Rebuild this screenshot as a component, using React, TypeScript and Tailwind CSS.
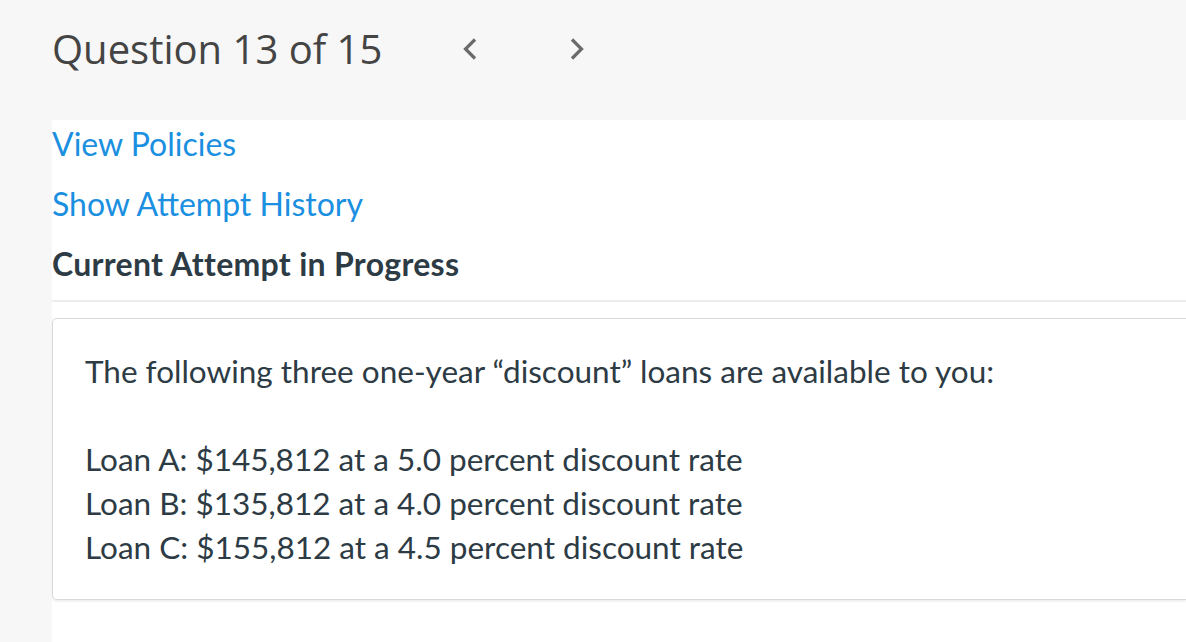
function Chevron({ dir }: { dir: 'left' | 'right' }) {
  return (
    <svg width="16" height="24" viewBox="0 0 16 24" fill="none">
      <path
        d={dir === 'left' ? 'M13 2.5 L3.5 12 L13 21.5' : 'M3 2.5 L12.5 12 L3 21.5'}
        stroke="#6b6b6b"
        strokeWidth="3.2"
      />
    </svg>
  );
}

export default function App() {
  return (
    <div className="min-h-[642px] bg-[#f7f7f7] flex flex-col">
      <div className="h-[120px] flex items-start pl-[52px] pt-[22px]">
        <h1 className="font-['Open_Sans',sans-serif] text-[40px] leading-[54px] text-[#444444]">
          Question 13 of 15
        </h1>
        <div className="flex items-center h-[54px] ml-[80px] gap-[91px]">
          <Chevron dir="left" />
          <Chevron dir="right" />
        </div>
      </div>

      <div className="flex-1 ml-[52px] bg-white font-['Lato',sans-serif] text-[32px] leading-[48px]">
        <div className="flex flex-col gap-3">
          <a className="text-[#1b8fe0] cursor-pointer">View Policies</a>
          <a className="text-[#1b8fe0] cursor-pointer">Show Attempt History</a>
          <div className="font-bold text-[#2d3b45] tracking-[0.3px]">Current Attempt in Progress</div>
        </div>
        <div className="mt-3 border-t-2 border-[#ededed]" />
        <div className="mt-[16px] border border-[#d9d9d9] border-r-0 rounded-l-[5px] shadow-[0_2px_2px_rgba(0,0,0,0.06)] pl-[32px] pt-[30px] pb-[30px] text-[#2d3b45] text-[31.5px] leading-[44px]">
          <p>The following three one-year “discount” loans are available to you:</p>
          <p className="mt-[44px]">
            Loan A: $145,812 at a 5.0 percent discount rate
            <br />
            Loan B: $135,812 at a 4.0 percent discount rate
            <br />
            Loan C: $155,812 at a 4.5 percent discount rate
          </p>
        </div>
      </div>
    </div>
  );
}
